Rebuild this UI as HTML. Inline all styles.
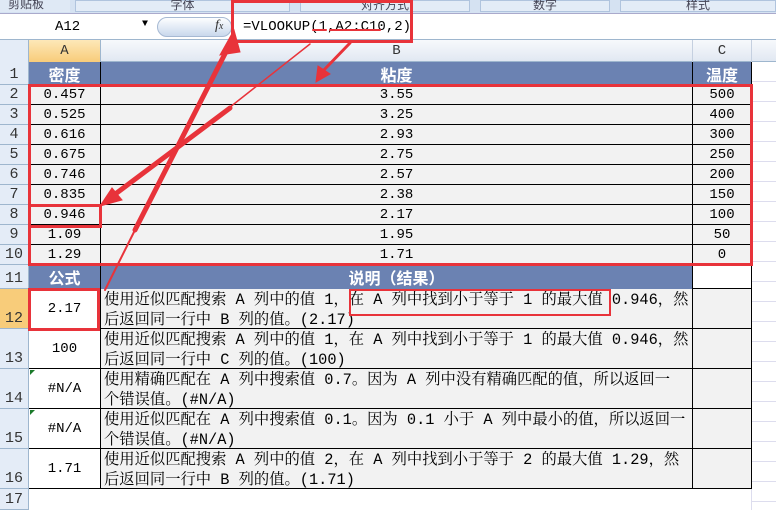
<!DOCTYPE html>
<html><head><meta charset="utf-8"><style>
*{margin:0;padding:0;box-sizing:border-box}
body{width:776px;height:510px;overflow:hidden;background:#fff;position:relative;font-family:"Liberation Mono","Noto Serif CJK SC",monospace;font-size:14px;color:#000}
div{position:absolute}
.rh{left:0;width:29px;background:#e4ecf7;border-bottom:1px solid #9eb6ce;text-align:center;font-size:15px;color:#333;display:flex;align-items:flex-end;justify-content:center;border-right:1px solid #9eb6ce;padding-bottom:1px}
.c{background:#f2f2f2;border-bottom:1px solid #000;border-right:1px solid #000;display:flex;align-items:center;justify-content:center;white-space:nowrap}
.h{background:#6b82b2;color:#fff;font-weight:bold;font-size:16px;font-family:"Noto Sans CJK SC",sans-serif;display:flex;align-items:center;justify-content:center;border-right:1px solid #000}
.t{white-space:nowrap;font-size:15.3px;line-height:20px;left:104px}
.rb{border:3px solid #e8333a}
</style></head><body>
<div style="left:0;top:0;width:776px;height:14px;background:#d5e2f2;border-bottom:1px solid #aac"></div>
<div style="left:0;top:0;width:70px;height:12px;background:#dfe9f5;font-size:12px;color:#445;font-family:'Noto Sans CJK SC';line-height:8px;padding-left:8px">剪贴板</div>
<div style="left:75px;top:0;width:215px;height:12px;background:#e3ecf7;border:1px solid #b0c4de;font-size:12px;color:#445;text-align:center;line-height:8px;font-family:'Noto Sans CJK SC'">字体</div>
<div style="left:300px;top:0;width:170px;height:12px;background:#e3ecf7;border:1px solid #b0c4de;font-size:12px;color:#445;text-align:center;line-height:8px;font-family:'Noto Sans CJK SC'">对齐方式</div>
<div style="left:480px;top:0;width:130px;height:12px;background:#e3ecf7;border:1px solid #b0c4de;font-size:12px;color:#445;text-align:center;line-height:8px;font-family:'Noto Sans CJK SC'">数字</div>
<div style="left:620px;top:0;width:156px;height:12px;background:#e3ecf7;border:1px solid #b0c4de;font-size:12px;color:#445;text-align:center;line-height:8px;font-family:'Noto Sans CJK SC'">样式</div>
<div style="left:0;top:15px;width:776px;height:25px;background:#fff;border-bottom:1px solid #9eb6ce"></div>
<div style="left:55px;top:19px;font-size:14px">A12</div>
<div style="left:142px;top:19px;font-size:10px">▼</div>
<div style="left:157px;top:17px;width:75px;height:20px;border-radius:10px;background:linear-gradient(#fdfeff,#c9d8ec);border:1px solid #a6b9d3"></div>
<div style="left:215px;top:18px;font-style:italic;font-family:'Liberation Serif';font-size:14px;color:#333">f<span style="font-size:10px">x</span></div>
<div style="left:243px;top:19px;font-size:14px">=VLOOKUP(1,A2:C10,2)</div>
<div style="left:0;top:40px;width:776px;height:22px;background:linear-gradient(#f7f9fc,#e1e8f2);border-bottom:1px solid #9eb6ce"></div>
<div style="left:29px;top:40px;width:72px;height:22px;background:linear-gradient(#fde8b8,#f8cc7a);border-right:1px solid #9eb6ce;text-align:center;line-height:22px;color:#333">A</div>
<div style="left:101px;top:40px;width:592px;height:22px;border-right:1px solid #c5d0e0;text-align:center;line-height:22px;color:#333">B</div>
<div style="left:693px;top:40px;width:59px;height:22px;border-right:1px solid #c5d0e0;text-align:center;line-height:22px;color:#333">C</div>
<div style="left:0;top:40px;width:29px;height:22px;background:#e4ecf7;border-right:1px solid #9eb6ce"></div>
<div class="rh" style="top:62px;height:23px">1</div>
<div class="rh" style="top:85px;height:20px">2</div>
<div class="rh" style="top:105px;height:20px">3</div>
<div class="rh" style="top:125px;height:20px">4</div>
<div class="rh" style="top:145px;height:20px">5</div>
<div class="rh" style="top:165px;height:20px">6</div>
<div class="rh" style="top:185px;height:20px">7</div>
<div class="rh" style="top:205px;height:20px">8</div>
<div class="rh" style="top:225px;height:20px">9</div>
<div class="rh" style="top:245px;height:20px">10</div>
<div class="rh" style="top:265px;height:24px">11</div>
<div class="rh" style="top:289px;height:40px;background:#f8cc7a">12</div>
<div class="rh" style="top:329px;height:40px">13</div>
<div class="rh" style="top:369px;height:40px">14</div>
<div class="rh" style="top:409px;height:40px">15</div>
<div class="rh" style="top:449px;height:40px">16</div>
<div class="rh" style="top:489px;height:21px">17</div>
<div style="left:752px;top:62px;width:24px;height:448px;background:repeating-linear-gradient(#fff 0 19px,#dde 19px 20px)"></div>
<div style="left:29px;top:489px;width:723px;height:21px;border-right:1px solid #dde"></div>
<div class="h" style="left:29px;top:62px;width:72px;height:23px">密度</div>
<div class="h" style="left:101px;top:62px;width:592px;height:23px">粘度</div>
<div class="h" style="left:693px;top:62px;width:59px;height:23px">温度</div>
<div class="c" style="left:29px;top:85px;width:72px;height:20px">0.457</div><div class="c" style="left:101px;top:85px;width:592px;height:20px">3.55</div><div class="c" style="left:693px;top:85px;width:59px;height:20px">500</div>
<div class="c" style="left:29px;top:105px;width:72px;height:20px">0.525</div><div class="c" style="left:101px;top:105px;width:592px;height:20px">3.25</div><div class="c" style="left:693px;top:105px;width:59px;height:20px">400</div>
<div class="c" style="left:29px;top:125px;width:72px;height:20px">0.616</div><div class="c" style="left:101px;top:125px;width:592px;height:20px">2.93</div><div class="c" style="left:693px;top:125px;width:59px;height:20px">300</div>
<div class="c" style="left:29px;top:145px;width:72px;height:20px">0.675</div><div class="c" style="left:101px;top:145px;width:592px;height:20px">2.75</div><div class="c" style="left:693px;top:145px;width:59px;height:20px">250</div>
<div class="c" style="left:29px;top:165px;width:72px;height:20px">0.746</div><div class="c" style="left:101px;top:165px;width:592px;height:20px">2.57</div><div class="c" style="left:693px;top:165px;width:59px;height:20px">200</div>
<div class="c" style="left:29px;top:185px;width:72px;height:20px">0.835</div><div class="c" style="left:101px;top:185px;width:592px;height:20px">2.38</div><div class="c" style="left:693px;top:185px;width:59px;height:20px">150</div>
<div class="c" style="left:29px;top:205px;width:72px;height:20px">0.946</div><div class="c" style="left:101px;top:205px;width:592px;height:20px">2.17</div><div class="c" style="left:693px;top:205px;width:59px;height:20px">100</div>
<div class="c" style="left:29px;top:225px;width:72px;height:20px">1.09</div><div class="c" style="left:101px;top:225px;width:592px;height:20px">1.95</div><div class="c" style="left:693px;top:225px;width:59px;height:20px">50</div>
<div class="c" style="left:29px;top:245px;width:72px;height:20px">1.29</div><div class="c" style="left:101px;top:245px;width:592px;height:20px">1.71</div><div class="c" style="left:693px;top:245px;width:59px;height:20px">0</div>
<div class="h" style="left:29px;top:265px;width:72px;height:24px">公式</div>
<div class="h" style="left:101px;top:265px;width:592px;height:24px">说明（结果）</div>
<div class="c" style="left:693px;top:265px;width:59px;height:24px;background:#fff;border-bottom:1px solid #000"></div>
<div class="c" style="left:29px;top:289px;width:72px;height:40px;background:#fff">2.17</div>
<div class="c" style="left:101px;top:289px;width:592px;height:40px"></div>
<div class="c" style="left:693px;top:289px;width:59px;height:40px"></div>
<div class="c" style="left:29px;top:329px;width:72px;height:40px;background:#fff">100</div>
<div class="c" style="left:101px;top:329px;width:592px;height:40px"></div>
<div class="c" style="left:693px;top:329px;width:59px;height:40px"></div>
<div class="c" style="left:29px;top:369px;width:72px;height:40px;background:#fff">#N/A</div>
<div class="c" style="left:101px;top:369px;width:592px;height:40px"></div>
<div class="c" style="left:693px;top:369px;width:59px;height:40px"></div>
<div class="c" style="left:29px;top:409px;width:72px;height:40px;background:#fff">#N/A</div>
<div class="c" style="left:101px;top:409px;width:592px;height:40px"></div>
<div class="c" style="left:693px;top:409px;width:59px;height:40px"></div>
<div class="c" style="left:29px;top:449px;width:72px;height:40px;background:#fff">1.71</div>
<div class="c" style="left:101px;top:449px;width:592px;height:40px"></div>
<div class="c" style="left:693px;top:449px;width:59px;height:40px"></div>
<div style="left:30px;top:370px;width:0;height:0;border-top:5px solid #1a7a2a;border-right:5px solid transparent"></div>
<div style="left:30px;top:410px;width:0;height:0;border-top:5px solid #1a7a2a;border-right:5px solid transparent"></div>
<div class="t" style="top:290px">使用近似匹配搜索 A 列中的值 1，在 A 列中找到小于等于 1 的最大值 0.946，然</div>
<div class="t" style="top:310px">后返回同一行中 B 列的值。(2.17)</div>
<div class="t" style="top:330px">使用近似匹配搜索 A 列中的值 1，在 A 列中找到小于等于 1 的最大值 0.946，然</div>
<div class="t" style="top:350px">后返回同一行中 C 列的值。(100)</div>
<div class="t" style="top:370px">使用精确匹配在 A 列中搜索值 0.7。因为 A 列中没有精确匹配的值，所以返回一</div>
<div class="t" style="top:390px">个错误值。(#N/A)</div>
<div class="t" style="top:410px">使用近似匹配在 A 列中搜索值 0.1。因为 0.1 小于 A 列中最小的值，所以返回一</div>
<div class="t" style="top:430px">个错误值。(#N/A)</div>
<div class="t" style="top:450px">使用近似匹配搜索 A 列中的值 2，在 A 列中找到小于等于 2 的最大值 1.29，然</div>
<div class="t" style="top:470px">后返回同一行中 B 列的值。(1.71)</div>
<div class="rb" style="left:231px;top:0;width:182px;height:43px"></div>
<div class="rb" style="left:28px;top:84px;width:725px;height:182px"></div>
<div class="rb" style="left:28px;top:204px;width:74px;height:24px"></div>
<div class="rb" style="left:28px;top:288px;width:72px;height:43px"></div>
<div class="rb" style="left:349px;top:289px;width:262px;height:27px;border-width:2px"></div>
<svg style="position:absolute;left:0;top:0" width="776" height="510">
<g fill="#e8333a" stroke="#e8333a" stroke-linecap="round">
<line x1="313" y1="30" x2="326" y2="30" stroke-width="2"/>
<line x1="330" y1="30" x2="380" y2="30" stroke-width="2"/>
<line x1="310" y1="44" x2="220" y2="115" stroke-width="1.5"/>
<line x1="230" y1="108" x2="110" y2="198" stroke-width="5"/>
<polygon points="100,206 112,188 122,200"/>
<line x1="232" y1="40" x2="135" y2="230" stroke-width="5"/>
<line x1="135" y1="230" x2="105" y2="290" stroke-width="2"/>
<polygon points="234,30 220,55 240,52"/>
<line x1="350" y1="43" x2="322" y2="72" stroke-width="3"/>
<polygon points="316,82 318,66 330,74"/>
</g>
</svg>
</body></html>
